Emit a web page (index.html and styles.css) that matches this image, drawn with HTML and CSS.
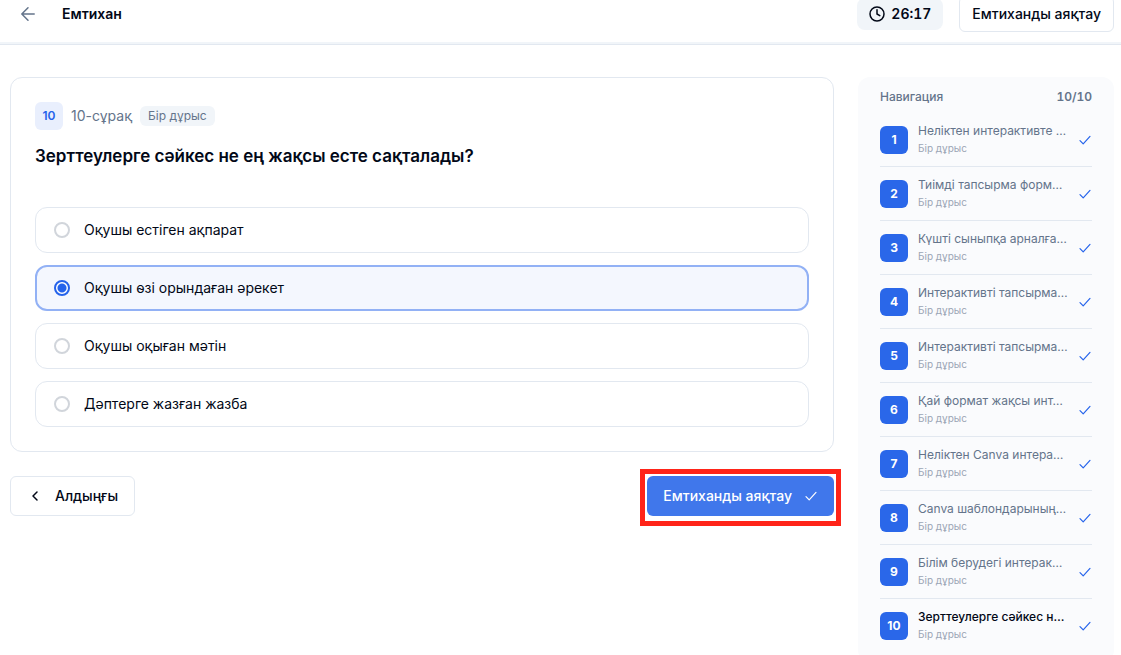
FILE: index.html
```html
<!DOCTYPE html>
<html lang="kk">
<head>
  <meta charset="UTF-8" />
  <meta name="viewport" content="width=device-width, initial-scale=1.0"/>
  <title>Емтихан</title>
  <link rel="stylesheet" href="styles.css">
</head>
<body>

  <svg class="sprite" aria-hidden="true">
    <symbol id="check" viewBox="0 0 14 14"><path d="M2 7.6 5.2 10.8 12 3.4"/></symbol>
  </svg>

  <header class="header">
    <a class="back" href="#" aria-label="Артқа">
      <svg width="16" height="16" viewBox="0 0 16 16"><path d="M14.2 8H2M8 1.8 1.8 8 8 14.2"/></svg>
    </a>
    <h1>Емтихан</h1>
    <div class="header-actions">
      <div class="timer">
        <svg width="16" height="16" viewBox="0 0 16 16"><circle cx="8" cy="8" r="7"/><path d="M8 3.8V8l2.8 1.6"/></svg>
        <span>26:17</span>
      </div>
      <button class="btn btn-end" type="button">Емтиханды аяқтау</button>
    </div>
  </header>

  <div class="layout">
    <main>
      <form id="exam">
        <section class="card">
          <div class="meta">
            <span class="badge">10</span>
            <span class="meta-label">10-сұрақ</span>
            <span class="tag">Бір дұрыс</span>
          </div>
          <h2 id="question">Зерттеулерге сәйкес не ең жақсы есте сақталады?</h2>
          <div class="options" role="radiogroup" aria-labelledby="question">
            <label class="option"><input type="radio" name="answer" value="1"><span>Оқушы естіген ақпарат</span></label>
            <label class="option"><input type="radio" name="answer" value="2" checked><span>Оқушы өзі орындаған әрекет</span></label>
            <label class="option"><input type="radio" name="answer" value="3"><span>Оқушы оқыған мәтін</span></label>
            <label class="option"><input type="radio" name="answer" value="4"><span>Дәптерге жазған жазба</span></label>
          </div>
        </section>
        <div class="actions">
          <button class="btn btn-prev" type="button">
            <svg width="16" height="16" viewBox="0 0 16 16"><path d="M10 4 6 8l4 4"/></svg>
            Алдыңғы
          </button>
          <button class="btn btn-submit" type="submit">
            Емтиханды аяқтау
            <svg class="tick"><use href="#check"/></svg>
          </button>
        </div>
      </form>
    </main>

    <aside class="sidebar">
      <div class="sidebar-head">
        <span>Навигация</span>
        <span class="count">10/10</span>
      </div>
      <nav>
        <a class="item" href="#"><span class="num">1</span><span class="text"><span class="name">Неліктен интерактивте …</span><span class="kind">Бір дұрыс</span></span><svg class="tick"><use href="#check"/></svg></a>
        <a class="item" href="#"><span class="num">2</span><span class="text"><span class="name">Тиімді тапсырма форм…</span><span class="kind">Бір дұрыс</span></span><svg class="tick"><use href="#check"/></svg></a>
        <a class="item" href="#"><span class="num">3</span><span class="text"><span class="name">Күшті сыныпқа арналға…</span><span class="kind">Бір дұрыс</span></span><svg class="tick"><use href="#check"/></svg></a>
        <a class="item" href="#"><span class="num">4</span><span class="text"><span class="name">Интерактивті тапсырма…</span><span class="kind">Бір дұрыс</span></span><svg class="tick"><use href="#check"/></svg></a>
        <a class="item" href="#"><span class="num">5</span><span class="text"><span class="name">Интерактивті тапсырма…</span><span class="kind">Бір дұрыс</span></span><svg class="tick"><use href="#check"/></svg></a>
        <a class="item" href="#"><span class="num">6</span><span class="text"><span class="name">Қай формат жақсы инт…</span><span class="kind">Бір дұрыс</span></span><svg class="tick"><use href="#check"/></svg></a>
        <a class="item" href="#"><span class="num">7</span><span class="text"><span class="name">Неліктен Canva интера…</span><span class="kind">Бір дұрыс</span></span><svg class="tick"><use href="#check"/></svg></a>
        <a class="item" href="#"><span class="num">8</span><span class="text"><span class="name">Canva шаблондарының…</span><span class="kind">Бір дұрыс</span></span><svg class="tick"><use href="#check"/></svg></a>
        <a class="item" href="#"><span class="num">9</span><span class="text"><span class="name">Білім берудегі интерак…</span><span class="kind">Бір дұрыс</span></span><svg class="tick"><use href="#check"/></svg></a>
        <a class="item current" href="#" aria-current="step"><span class="num">10</span><span class="text"><span class="name">Зерттеулерге сәйкес н…</span><span class="kind">Бір дұрыс</span></span><svg class="tick"><use href="#check"/></svg></a>
      </nav>
    </aside>
  </div>

</body>
</html>
```
FILE: styles.css
```css
* {
  box-sizing: border-box;
}
body {
  margin: 0;
  background: #fff;
  color: #020817;
  font-family: Inter, "Noto Sans", sans-serif;
  font-size: 14px;
  line-height: 20px;
  overflow: hidden;
  height: 100vh;
}
h1, h2 {
  margin: 0;
}
a {
  color: inherit;
  text-decoration: none;
}
svg {
  flex: none;
  fill: none;
  stroke: currentColor;
  stroke-width: 1.5;
  stroke-linecap: round;
  stroke-linejoin: round;
}
.sprite {
  display: none;
}

/* header, scrolled partly out of view */
.header {
  display: flex;
  align-items: center;
  height: 59px;
  margin-top: -14px;
  padding: 0 7px 2px 20px;
  border-bottom: 1px solid #e2e8f0;
  box-shadow: inset 0 -2px #f1f5f9;
}
.back {
  display: flex;
  margin-right: 26px;
  color: #64748b;
}
.header h1 {
  font-size: 14px;
  font-weight: 600;
}
.header-actions {
  display: flex;
  align-items: center;
  gap: 16px;
  margin-left: auto;
}
.timer {
  display: flex;
  align-items: center;
  gap: 6px;
  height: 32px;
  padding: 0 12px;
  border-radius: 8px;
  background: #f1f5f9;
  font-weight: 600;
  font-variant-numeric: tabular-nums;
}
.btn {
  display: flex;
  align-items: center;
  height: 40px;
  padding: 0 16px;
  border: 1px solid #e2e8f0;
  border-radius: 6px;
  background: #fff;
  color: #020817;
  font: inherit;
  font-weight: 500;
  white-space: nowrap;
  cursor: pointer;
}
.btn-end {
  height: 36px;
  padding: 0 12px;
}

.layout {
  display: grid;
  grid-template-columns: minmax(0, 1fr) 256px;
  gap: 24px;
  padding: 32px 7px 0 10px;
}

/* question */
.card {
  padding: 24px;
  border: 1px solid #e2e8f0;
  border-radius: 12px;
}
.meta {
  display: flex;
  align-items: center;
  gap: 8px;
  color: #64748b;
}
.badge {
  width: 28px;
  height: 28px;
  border-radius: 6px;
  background: #e9effd;
  color: #2563eb;
  font-size: 12px;
  font-weight: 600;
  line-height: 28px;
  text-align: center;
}
.tag {
  padding: 0 8px;
  border-radius: 6px;
  background: #f1f5f9;
  font-size: 12px;
}
.card h2 {
  margin: 12px 0 36px;
  font-size: 17px;
  font-weight: 600;
  line-height: 29px;
}
.options {
  display: flex;
  flex-direction: column;
  gap: 12px;
}
.option {
  display: flex;
  align-items: center;
  gap: 14px;
  height: 46px;
  padding: 0 18px;
  border: 1px solid #e2e8f0;
  border-radius: 12px;
  cursor: pointer;
}
.option input {
  appearance: none;
  width: 16px;
  height: 16px;
  margin: 0;
  border: 2px solid #d1d5db;
  border-radius: 50%;
  background: #fff;
}
.option:has(:checked) {
  padding: 0 17px;
  border: 2px solid #92b1f5;
  background: #f4f7fe;
}
.option input:checked {
  border-color: #2563eb;
  background: radial-gradient(circle, #2563eb 4px, #fff 5px);
}

.actions {
  display: flex;
  justify-content: space-between;
  margin-top: 24px;
}
.btn-prev {
  gap: 12px;
}
.btn-submit {
  position: relative;
  gap: 12px;
  border: 0;
  background: #4077eb;
  color: #fff;
}
/* red marker around the finish button */
.btn-submit::after {
  content: "";
  position: absolute;
  inset: -7px -7px -10px;
  border: 5px solid #ff2419;
}

/* navigation */
.sidebar {
  padding: 10px 22px;
  border-radius: 12px;
  background: #fafbfd;
  color: #64748b;
  font-size: 12px;
}
.sidebar-head {
  display: flex;
  justify-content: space-between;
  margin-bottom: 6px;
  font-weight: 500;
}
.count {
  font-weight: 600;
  font-variant-numeric: tabular-nums;
}
.item {
  display: flex;
  align-items: center;
  gap: 10px;
  padding: 10px 0 9px;
  border-bottom: 1px solid #e2e8f0;
}
.item:last-child {
  border-bottom: 0;
}
.num {
  flex: none;
  width: 28px;
  border-radius: 6px;
  background: #2a67e9;
  color: #fff;
  font-weight: 700;
  line-height: 28px;
  text-align: center;
}
.text {
  flex: 1;
  display: flex;
  flex-direction: column;
  gap: 2px;
  min-width: 0;
  padding-bottom: 2px;
  line-height: 16px;
}
.name {
  white-space: nowrap;
}
.kind {
  color: #9aa5b5;
  font-size: 10px;
  line-height: 14px;
}
.current .name {
  color: #020817;
  font-weight: 500;
}
.tick {
  width: 14px;
  height: 14px;
  stroke-width: 1.2;
}
.item .tick {
  color: #2563eb;
}
```
